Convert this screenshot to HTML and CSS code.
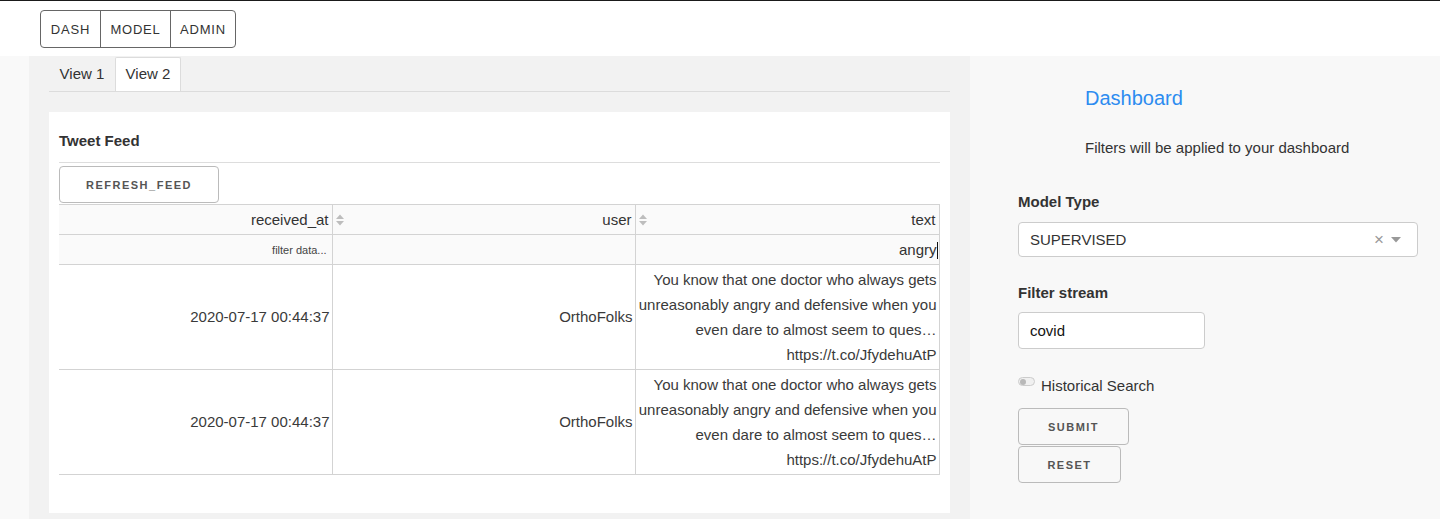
FILE: index.html
```html
<!DOCTYPE html>
<html lang="en">
<head>
<meta charset="utf-8">
<title>Dashboard</title>
<link rel="stylesheet" href="styles.css">
</head>
<body>
<header class="topbar">
  <nav class="navgroup">
    <a class="navbtn">DASH</a>
    <a class="navbtn">MODEL</a>
    <a class="navbtn">ADMIN</a>
  </nav>
</header>
<main class="main">
  <section class="leftcol">
    <div class="tabs">
      <div class="tab">View 1</div>
      <div class="tab tab-active">View 2</div>
    </div>
    <div class="card">
      <h3 class="card-title">Tweet Feed</h3>
      <hr class="card-rule">
      <button class="btn btn-refresh">REFRESH_FEED</button>
      <table class="grid">
        <colgroup>
          <col class="c1"><col class="c2"><col class="c3">
        </colgroup>
        <thead>
          <tr class="hrow">
            <th><div class="hcell"><span></span><span>received_at</span></div></th>
            <th><div class="hcell"><svg class="sort" width="8" height="12" viewBox="0 0 8 12"><polygon points="0,5 4,0.5 8,5" /><polygon points="0,7 4,11.5 8,7" /></svg><span>user</span></div></th>
            <th><div class="hcell"><svg class="sort" width="8" height="12" viewBox="0 0 8 12"><polygon points="0,5 4,0.5 8,5" /><polygon points="0,7 4,11.5 8,7" /></svg><span>text</span></div></th>
          </tr>
          <tr class="frow">
            <th class="fcell fph">filter data...</th>
            <th class="fcell"></th>
            <th class="fcell fval">angry<span class="caret"></span></th>
          </tr>
        </thead>
        <tbody>
          <tr class="drow">
            <td>2020-07-17 00:44:37</td>
            <td>OrthoFolks</td>
            <td>You know that one doctor who always gets unreasonably angry and defensive when you even dare to almost seem to ques… https://t.co/JfydehuAtP</td>
          </tr>
          <tr class="drow">
            <td>2020-07-17 00:44:37</td>
            <td>OrthoFolks</td>
            <td>You know that one doctor who always gets unreasonably angry and defensive when you even dare to almost seem to ques… https://t.co/JfydehuAtP</td>
          </tr>
        </tbody>
      </table>
    </div>
  </section>
  <aside class="rightcol">
    <h2 class="dash-title">Dashboard</h2>
    <p class="dash-sub">Filters will be applied to your dashboard</p>
    <label class="flabel">Model Type</label>
    <div class="select">
      <span class="select-val">SUPERVISED</span>
      <span class="select-clear">×</span>
      <svg class="select-arrow" width="10" height="6" viewBox="0 0 10 6"><polygon points="0,0 10,0 5,5.5" /></svg>
    </div>
    <label class="flabel flabel-2">Filter stream</label>
    <div class="textin">covid</div>
    <div class="toggle-row">
      <span class="toggle"><span class="knob"></span></span>
      <span class="toggle-label">Historical Search</span>
    </div>
    <div class="btn-stack">
      <button class="btn btn-submit">SUBMIT</button>
      <button class="btn btn-reset">RESET</button>
    </div>
  </aside>
</main>
</body>
</html>
```

FILE: styles.css
```css
* { box-sizing: border-box; }

html, body {
  margin: 0;
  padding: 0;
  height: 519px;
  overflow: hidden;
}

body {
  font-family: "Liberation Sans", Arial, Helvetica, sans-serif;
  color: #333;
  background: #f9f9f9;
  font-size: 15px;
}

.topbar {
  height: 56px;
  background: #fff;
  border-top: 1px solid #1a1a1a;
  padding: 9px 0 0 40px;
}

.navgroup {
  display: inline-flex;
  border: 1px solid #666;
  border-radius: 4px;
  height: 38px;
}

.navbtn {
  display: flex;
  align-items: center;
  justify-content: center;
  font-size: 13px;
  letter-spacing: 0.8px;
  color: #333;
  border-left: 1px solid #666;
}

.navbtn:first-child { border-left: none; width: 59px; }
.navbtn:nth-child(2) { width: 70px; }
.navbtn:nth-child(3) { width: 65px; }

.main {
  display: flex;
  height: 463px;
  padding-left: 29px;
  background: #f9f9f9;
}

.leftcol {
  width: 941px;
  background: #f2f2f2;
  padding: 0 20px;
}

.tabs {
  display: flex;
  height: 36px;
  padding-top: 1px;
  border-bottom: 1px solid #dcdcdc;
}

.tab {
  width: 66px;
  display: flex;
  align-items: center;
  justify-content: center;
  padding-bottom: 2px;
  font-size: 15px;
  color: #333;
  border: 1px solid transparent;
  border-bottom: none;
}

.tab-active {
  background: #fff;
  border-color: #dcdcdc;
  border-radius: 2px 2px 0 0;
}

.card {
  margin-top: 20px;
  background: #fff;
  height: 401px;
  padding: 19px 10px 0 10px;
}

.card-title {
  margin: 0;
  font-size: 15px;
  line-height: 20px;
  font-weight: bold;
  color: #333;
}

.card-rule {
  margin: 11px 0 0 0;
  border: none;
  border-top: 1px solid #ddd;
  height: 0;
}

.btn {
  display: block;
  height: 37px;
  background: transparent;
  border: 1px solid #bbb;
  border-radius: 4px;
  font-family: "Liberation Sans", Arial, sans-serif;
  font-weight: bold;
  font-size: 11px;
  letter-spacing: 1.5px;
  color: #555;
  padding: 0;
  text-align: center;
}

.btn-refresh {
  margin-top: 3px;
  width: 160px;
}

.grid {
  margin-top: 1px;
  width: 880px;
  table-layout: fixed;
  border-collapse: collapse;
  font-size: 15px;
  color: #333;
}

.c1 { width: 273px; }
.c2 { width: 303px; }
.c3 { width: 304px; }

.grid th, .grid td {
  border-right: 1px solid #d3d3d3;
  border-bottom: 1px solid #d3d3d3;
  padding: 0 3px;
  text-align: right;
  font-weight: normal;
}

.hrow th {
  border-top: 1px solid #d3d3d3;
  background: #fafafa;
  height: 30px;
}

.hcell {
  display: flex;
  justify-content: space-between;
  align-items: center;
  line-height: 28px;
}

.sort {
  fill: #bdbdbd;
  margin-left: 0;
}

.frow th {
  background: #fafafa;
  height: 30px;
}

.fph {
  font-size: 11px;
  color: #444;
  padding-right: 5px !important;
}

.fval {
  color: #333;
  font-size: 15px;
  padding-right: 1px !important;
}

.caret {
  display: inline-block;
  width: 1px;
  height: 17px;
  background: #111;
  vertical-align: -4px;
}

.drow td {
  height: 105px;
  line-height: 25px;
  padding: 1px 2px 2px 3px;
  vertical-align: middle;
  color: #3a3a3a;
}

.rightcol {
  flex: 1;
  background: #f8f8f8;
  padding: 30px 22px 0 48px;
}

.dash-title {
  margin: 0 0 0 67px;
  font-size: 20px;
  line-height: 24px;
  font-weight: normal;
  color: #2d8cf0;
}

.dash-sub {
  margin: 28px 0 0 67px;
  font-size: 15px;
  line-height: 20px;
  color: #333;
}

.flabel {
  display: block;
  margin-top: 34px;
  font-size: 15px;
  line-height: 20px;
  font-weight: bold;
  color: #333;
}

.flabel-2 { margin-top: 26px; }

.select {
  margin-top: 10px;
  width: 400px;
  height: 35px;
  background: #fff;
  border: 1px solid #ccc;
  border-radius: 4px;
  display: flex;
  align-items: center;
  padding: 0 16px 0 11px;
}

.select-val {
  flex: 1;
  font-size: 15px;
  color: #333;
}

.select-clear {
  font-size: 17px;
  color: #999;
  margin-right: 7px;
  line-height: 1;
}

.select-arrow { fill: #999; }

.textin {
  margin-top: 9px;
  width: 187px;
  height: 37px;
  background: #fff;
  border: 1px solid #ccc;
  border-radius: 4px;
  padding: 0 11px;
  display: flex;
  align-items: center;
  font-size: 15px;
  color: #111;
}

.toggle-row {
  margin-top: 26px;
  display: flex;
  align-items: center;
  height: 20px;
}

.toggle {
  width: 17px;
  height: 9px;
  border: 1px solid #ccc;
  border-radius: 5px;
  background: #f0f0f0;
  margin-right: 6px;
  margin-bottom: 7px;
  display: flex;
  align-items: center;
  padding-left: 1px;
}

.knob {
  width: 6px;
  height: 6px;
  border-radius: 50%;
  background: #b8b8b8;
}

.toggle-label {
  font-size: 15px;
  color: #333;
}

.btn-stack {
  margin-top: 13px;
}

.btn-submit { width: 111px; }
.btn-reset { width: 103px; margin-top: 1px; }
```
